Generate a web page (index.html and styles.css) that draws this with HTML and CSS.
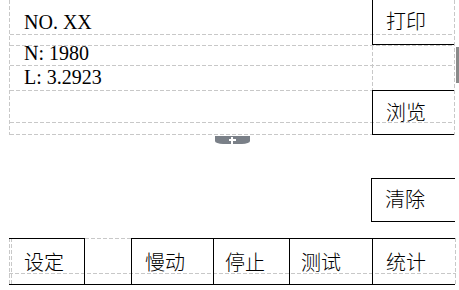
FILE: index.html
```html
<!DOCTYPE html>
<html lang="zh">
<head>
<meta charset="utf-8">
<title>Form</title>
<link rel="stylesheet" href="styles.css">
</head>
<body>
<div class="canvas">
  <div class="sheet">
    <div class="rule row1"></div>
    <div class="rule row2"></div>
    <div class="rule row3"></div>
    <div class="rule row4"></div>
    <div class="rule row5"></div>
    <div class="rule row6"></div>
    <div class="label label-no">NO. XX</div>
    <div class="label label-n">N: 1980</div>
    <div class="label label-l">L: 3.2923</div>
    <div class="vsep"></div>
    <div class="btn btn-print">打印</div>
    <div class="btn btn-browse">浏览</div>
  </div>
  <div class="tabbar"><div class="tab"><span class="plus"></span></div></div>
  <div class="clear-row"><div class="btn btn-clear">清除</div></div>
  <div class="toolbar">
    <div class="cell cell-set">设定</div>
    <div class="cell cell-gap"></div>
    <div class="cell cell-slow">慢动</div>
    <div class="cell cell-stop">停止</div>
    <div class="cell cell-test">测试</div>
    <div class="cell cell-stat">统计</div>
  </div>
</div>
<div class="scroll-thumb"></div>
</body>
</html>
```
FILE: styles.css
```css
html, body {
  margin: 0;
  padding: 0;
  background: #ffffff;
}
body {
  width: 459px;
  height: 290px;
  overflow: hidden;
  position: relative;
  font-family: "Liberation Serif", "Noto Sans CJK SC", serif;
  color: #000;
}
.canvas {
  display: flex;
  flex-direction: column;
}
.sheet {
  margin-left: 9px;
  width: 444px;
  display: grid;
  grid-template-columns: 362px 82px;
  grid-template-rows: 35px 11px 20px 25px 32px 12px;
  border-left: 1px dashed #c8c8c8;
  border-right: 1px dashed #c8c8c8;
  border-left-style: none;
  border-right-style: none;
  background:
    repeating-linear-gradient(to bottom, #c8c8c8 0 4px, transparent 4px 6px) left top / 1px 100% no-repeat,
    repeating-linear-gradient(to bottom, #c8c8c8 0 4px, transparent 4px 6px) right top / 1px 100% no-repeat;
  padding: 0 1px;
}
.rule {
  grid-column: 1 / -1;
  background: repeating-linear-gradient(to right, #c8c8c8 0 4px, transparent 4px 6px) left bottom / 100% 1px no-repeat;
}
.row1 { grid-row: 1; }
.row2 { grid-row: 2; }
.row3 { grid-row: 3; }
.row4 { grid-row: 4; }
.row5 { grid-row: 5; }
.row6 { grid-row: 6; }
.label {
  grid-column: 1;
  align-self: start;
  font-size: 20px;
  line-height: 20px;
  padding-left: 14px;
  white-space: nowrap;
}
.label-no { grid-row: 1; margin-top: 12px; }
.label-n { grid-row: 3; margin-top: -3px; }
.label-l { grid-row: 4; margin-top: 1px; }
.vsep {
  grid-column: 2;
  grid-row: 3 / 5;
  background: repeating-linear-gradient(to bottom, #c8c8c8 0 4px, transparent 4px 6px) left top / 1px 100% no-repeat;
}
.btn {
  box-sizing: border-box;
  height: 45px;
  border: 1px solid #000;
  border-right: none;
  display: flex;
  align-items: center;
  padding-left: 13px;
  padding-bottom: 2px;
  font-family: "Noto Sans CJK SC", sans-serif;
  font-weight: 300;
  font-size: 20px;
  line-height: 1;
  white-space: nowrap;
}
.btn-print {
  grid-column: 2;
  grid-row: 1 / 3;
  align-self: start;
  border-top: none;
}
.btn-browse {
  grid-column: 2;
  grid-row: 5 / 7;
  align-self: start;
  margin-top: -1px;
}
.tabbar {
  display: flex;
  justify-content: center;
  width: 446px;
  margin-left: 9px;
  margin-top: 1px;
}
.tab {
  width: 35px;
  height: 8px;
  background: #7a8088;
  border-radius: 0 0 8px 8px / 0 0 3px 3px;
  position: relative;
  display: flex;
  justify-content: center;
  align-items: center;
}
.plus {
  position: relative;
  width: 7px;
  height: 7px;
  background:
    linear-gradient(#ffffff, #ffffff) center / 7px 2px no-repeat,
    linear-gradient(#ffffff, #ffffff) center / 2px 7px no-repeat;
}
.clear-row {
  display: flex;
  margin-top: 34px;
  margin-left: 371px;
}
.btn-clear {
  width: 84px;
  height: 44px;
}
.toolbar {
  display: flex;
  margin-top: 16px;
  margin-left: 9px;
  width: 447px;
  height: 47px;
  box-sizing: border-box;
  background:
    repeating-linear-gradient(to right, #c8c8c8 0 4px, transparent 4px 6px) left 35px / 100% 1px no-repeat,
    repeating-linear-gradient(to bottom, #c8c8c8 0 4px, transparent 4px 6px) left top / 1px 100% no-repeat,
    repeating-linear-gradient(to bottom, #c8c8c8 0 4px, transparent 4px 6px) 2px top / 1px 100% no-repeat,
    repeating-linear-gradient(to bottom, #c8c8c8 0 4px, transparent 4px 6px) right top / 1px 100% no-repeat;
}
.cell {
  box-sizing: border-box;
  height: 47px;
  border-top: 1px solid #000;
  border-bottom: 1px solid #000;
  display: flex;
  align-items: center;
  font-family: "Noto Sans CJK SC", sans-serif;
  font-weight: 300;
  font-size: 20px;
  line-height: 1;
  white-space: nowrap;
}
.cell-set { width: 76px; border-right: 1px solid #000; padding-left: 15px; }
.cell-gap {
  width: 46px;
  border-top: none;
  background: repeating-linear-gradient(to right, #c8c8c8 0 4px, transparent 4px 6px) left top / 100% 1px no-repeat;
}
.cell-slow { width: 83px; border-left: 1px solid #000; border-right: 1px solid #000; padding-left: 13px; }
.cell-stop { width: 76px; border-right: 1px solid #000; padding-left: 11px; }
.cell-test { width: 83px; border-right: 1px solid #000; padding-left: 11px; }
.cell-stat { width: 82px; padding-left: 13px; }
.scroll-thumb {
  position: absolute;
  left: 456px;
  top: 47px;
  width: 3px;
  height: 36px;
  background: #8a8a8a;
}
```
